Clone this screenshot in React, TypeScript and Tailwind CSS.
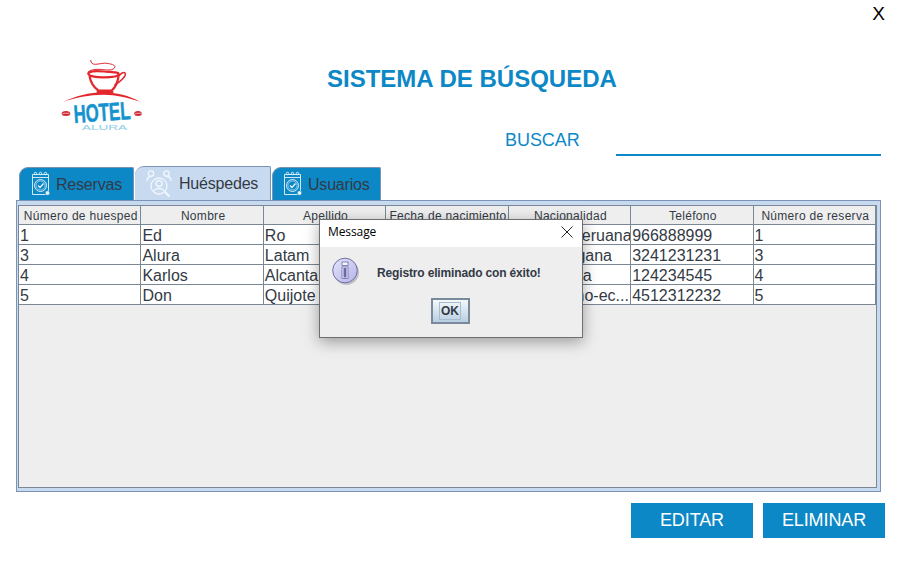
const rows = [
  ['1', 'Ed', 'Ro', '', 'peruano peruana', '966888999', '1'],
  ['3', 'Alura', 'Latam', '', 'alemana-gana', '3241231231', '3'],
  ['4', 'Karlos', 'Alcantara', '', 'venezolana', '124234545', '4'],
  ['5', 'Don', 'Quijote', '', 'ecuatoriano-ec...', '4512312232', '5'],
];

const headers = [
  'Número de huesped',
  'Nombre',
  'Apellido',
  'Fecha de nacimiento',
  'Nacionalidad',
  'Teléfono',
  'Número de reserva',
];

const Logo = () => (
  <svg width="90" height="76" viewBox="0 0 90 76" fill="none">
    {/* steam */}
    <path d="M33.700 2c0 3 2 4.500 5 4.300 4-.3 8-1.500 11-1 4 .5 8.500 1.700 8.300 3.400-.2 2-3 3.300-6 3.300-4.500 0-9-1-13-.6-3 .3-6 1-7.700 2.300" stroke="#e2282e" strokeWidth="1" />
    {/* cup */}
    <path d="M32 14.500c4-2 10-1.500 15-1 5 .5 11 .2 14 1.500 1.500 1 0 3-3 3.500-7 1.200-19 1.200-24-.6-2.500-1-3.500-2.500-2-3.400z" stroke="#e2282e" strokeWidth="2.200" />
    <path d="M32.500 18c1 6 4 11 8.800 14.500h13.400c3.500-3 6-8 6.800-14" stroke="#e2282e" strokeWidth="2.200" />
    <path d="M61.500 18.500c1.500-2.500 5-5 6.500-3.500 1.300 1.500-.5 4-3 6.500-2 2-4.500 4-7.500 5.500" stroke="#e2282e" strokeWidth="1.600" />
    <path d="M39.700 34h16.600" stroke="#e2282e" strokeWidth="2.200" />
    {/* saucer swoosh */}
    <path d="M6.300 43.700c12-5.500 26-9.500 40-9.500 13 0 26 3.500 36.700 9.500-12-4-24-7-36.700-7-14 0-28 3-40 7z" fill="#e2282e" />
    {/* beans */}
    <ellipse cx="9" cy="55.500" rx="4.300" ry="2.500" fill="#cf2a30" />
    <path d="M5.500 55.800c2-1 4.500-.2 7-.6" stroke="#fff" strokeWidth="0.6" />
    <ellipse cx="81" cy="55.500" rx="3.800" ry="2.500" fill="#cf2a30" />
    <path d="M78 55.800c2-1 4-.2 6.500-.6" stroke="#fff" strokeWidth="0.6" />
    <text x="16.500" y="63" fontFamily="'Liberation Sans', sans-serif" fontWeight="700" fontSize="25" textLength="57" lengthAdjust="spacingAndGlyphs" fill="#1593cf" stroke="#1593cf" strokeWidth="0.5" transform="rotate(-4 45 54)">
      HOTEL
    </text>
    <text x="25" y="72" fontFamily="'Liberation Sans', sans-serif" fontSize="8" textLength="45" lengthAdjust="spacingAndGlyphs" fill="#8ccbea">
      ALURA
    </text>
  </svg>
);

const NoteIcon = () => (
  <svg width="20" height="26" viewBox="0 0 20 26" fill="none" stroke="#e8f4fb" strokeWidth="0.9">
    <path d="M1.500 3.500h16v20h-16z" />
    <path d="M1.500 6.500h16" />
    <circle cx="4.500" cy="2.500" r="1.200" />
    <circle cx="9.500" cy="2.500" r="1.200" />
    <circle cx="14.500" cy="2.500" r="1.200" />
    <circle cx="9.500" cy="14.500" r="6" />
    <circle cx="9.500" cy="14.500" r="4.600" strokeWidth="0.6" />
    <path d="M7 14.500l2 2 3.500-4" strokeWidth="1.300" />
    <circle cx="16.500" cy="22" r="2.300" fill="#e8f4fb" stroke="#0c88c6" strokeWidth="0.6" />
  </svg>
);

const GuestIcon = () => (
  <svg width="26" height="27" viewBox="0 0 26 27" fill="none" stroke="#f2f7fc" strokeWidth="1.300">
    <circle cx="5" cy="3.500" r="2.700" />
    <circle cx="20.500" cy="3.500" r="2.700" />
    <path d="M1 11c0-3 2-4.500 4.500-4.500M25 11c0-3-2-4.500-4.500-4.500" />
    <circle cx="13" cy="16" r="8" />
    <circle cx="13" cy="13.500" r="3" />
    <path d="M8 21.500c.5-4 9.500-4 10 0" />
    <path d="M19 22l4.500 4.500" strokeWidth="2" />
  </svg>
);

const InfoIcon = () => (
  <svg width="28" height="28" viewBox="0 0 28 28">
    <defs>
      <linearGradient id="infoFill" x1="0" y1="0" x2="1" y2="1">
        <stop offset="0" stopColor="#e4e4fa" />
        <stop offset="1" stopColor="#b4b4ea" />
      </linearGradient>
    </defs>
    <circle cx="14.500" cy="15.500" r="12.500" fill="#55556e" opacity="0.3" />
    <circle cx="13" cy="13.500" r="12.300" fill="url(#infoFill)" stroke="#6e6ea4" />
    <rect x="10" y="5" width="6" height="3.500" fill="#f6f6ff" stroke="#5c5c96" strokeWidth="0.7" />
    <rect x="10" y="10" width="6" height="11.500" fill="#f0f0ff" stroke="#5c5c96" strokeWidth="0.7" />
    <rect x="11.500" y="11" width="3" height="9.500" fill="#6a6aaa" />
  </svg>
);

const Tab = ({ label, active, icon, className }: { label: string; active?: boolean; icon: React.ReactNode; className: string }) => (
  <div
    className={`flex items-center border-t border-r border-[#7b93b5] rounded-tl-[9px] rounded-tr-[2px] ${className} ${
      active ? 'h-[34px] bg-[#c8daf0]' : 'h-[33px] border-l bg-[#0c88c6]'
    }`}
  >
    {icon}
    <span className="pt-[1px] text-[16px] tracking-[-0.2px] text-[#333a45]">{label}</span>
  </div>
);

const App = () => {
  return (
    <div className="relative flex h-[564px] w-[905px] flex-col overflow-hidden bg-white font-['Liberation_Sans',sans-serif] text-[#333a45]">
      {/* Top */}
      <div className="flex h-[28px] justify-end pr-[20px] pt-[3px] text-[19px] leading-[22px] text-black">X</div>
      <div className="flex h-[138px]">
        <div className="ml-[57px] mt-[30px]">
          <Logo />
        </div>
        <div className="ml-[180px] flex flex-1 flex-col">
          <h1 className="mt-[37px] text-[24px] font-bold leading-[28px] text-[#0c88c6]">SISTEMA DE BÚSQUEDA</h1>
          <div className="mt-[32px] flex items-start">
            <span className="ml-[178px] pt-[5px] text-[18px] leading-[20px] tracking-[-0.05px] text-[#0c88c6]">BUSCAR</span>
            <div className="ml-[36px] h-[31px] w-[265px] border-b-2 border-[#0c88c6]" />
          </div>
        </div>
      </div>

      {/* Tabs */}
      <div className="ml-[19px] flex h-[34px] items-end gap-px">
        <Tab label="Reservas" icon={<NoteIcon />} className="w-[115px] gap-[5px] pl-[11px]" />
        <Tab label="Huéspedes" active icon={<GuestIcon />} className="w-[136px] gap-[7px] pl-[11px]" />
        <Tab label="Usuarios" icon={<NoteIcon />} className="w-[109px] gap-[5px] pl-[10px]" />
      </div>

      {/* Table panel */}
      <div className="ml-[16px] h-[292px] w-[865px] border border-[#7b93b5] bg-[#c8daf0] p-[1px] pt-[4px]">
        <div className="flex h-[283px] w-[859px] flex-col border border-[#7a8794] bg-[#eeeeee]">
          <div className="grid grid-cols-7 border-b border-[#7a8794] bg-[#eeeeee]">
            {headers.map((h) => (
              <div key={h} className="h-[18px] overflow-hidden whitespace-nowrap border-r border-[#7a8794] pl-[2px] text-center text-[12px] leading-[20px] tracking-[0.3px] text-[#333a45]">
                {h}
              </div>
            ))}
          </div>
          {rows.map((row) => (
            <div key={row[0]} className="grid grid-cols-7 border-b border-[#7a8794] bg-white">
              {row.map((cell, i) => (
                <div key={i} className="h-[19px] overflow-hidden whitespace-nowrap border-r border-[#7a8794] pl-[1px] text-[16px] leading-[21px] text-[#333a45]">
                  {cell}
                </div>
              ))}
            </div>
          ))}
        </div>
      </div>

      {/* Buttons */}
      <div className="mt-[11px] flex justify-end gap-[10px] pr-[20px]">
        <button className="h-[35px] w-[122px] bg-[#0c88c6] text-[18px] tracking-[-0.1px] text-white">EDITAR</button>
        <button className="h-[35px] w-[122px] bg-[#0c88c6] text-[18px] tracking-[-0.1px] text-white">ELIMINAR</button>
      </div>

      {/* Message dialog */}
      <div className="absolute left-[319px] top-[219px] flex h-[119px] w-[264px] flex-col border border-[#6e6e6e] bg-[#eeeeee] shadow-[0_4px_14px_rgba(0,0,0,0.35)]">
        <div className="flex h-[27px] items-center justify-between bg-white pl-[8px] pr-[9px] pb-[3px] font-['Open_Sans',sans-serif] text-[12px] tracking-[-0.1px] text-black">
          <span>Message</span>
          <svg width="12" height="12" viewBox="0 0 12 12" stroke="#222" strokeWidth="1" fill="none">
            <path d="M.5.5l11 11M11.500.5l-11 11" />
          </svg>
        </div>
        <div className="flex pl-[12px] pt-[10px]">
          <InfoIcon />
          <span className="ml-[17px] pt-[8px] text-[12px] font-bold leading-[16px] tracking-[-0.15px] text-[#333a45]">Registro eliminado con éxito!</span>
        </div>
        <div className="mt-[13px] flex justify-center pr-[2px]">
          <div className="flex h-[26px] w-[39px] items-center justify-center border-[2px] border-[#7a8a9a] bg-gradient-to-b from-[#f4f8fb] to-[#b8cfe2]">
            <span className="border border-[#a8bccf] px-px text-[12px] font-bold leading-[16px] text-[#333a45]">OK</span>
          </div>
        </div>
      </div>
    </div>
  );
};

export default App;
